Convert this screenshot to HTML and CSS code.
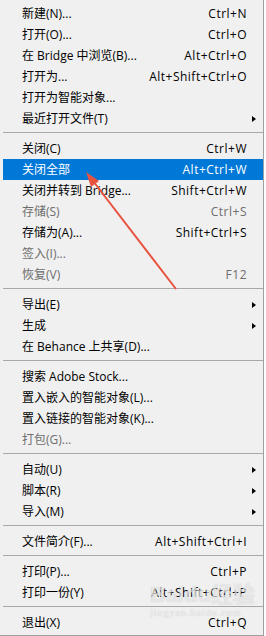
FILE: index.html
```html
<!DOCTYPE html>
<html>
<head>
<meta charset="utf-8">
<link rel="stylesheet" href="styles.css">
</head>
<body>
<div class="menu">
  <div class="item"><span class="label">新建(N)...</span><span class="key">Ctrl+N</span></div>
  <div class="item"><span class="label">打开(O)...</span><span class="key">Ctrl+O</span></div>
  <div class="item"><span class="label">在 Bridge 中浏览(B)...</span><span class="key">Alt+Ctrl+O</span></div>
  <div class="item"><span class="label">打开为...</span><span class="key">Alt+Shift+Ctrl+O</span></div>
  <div class="item"><span class="label">打开为智能对象...</span></div>
  <div class="item sub"><span class="label">最近打开文件(T)</span><span class="arrow"></span></div>
  <div class="sep"></div>
  <div class="item"><span class="label">关闭(C)</span><span class="key">Ctrl+W</span></div>
  <div class="item active"><span class="label">关闭全部</span><span class="key">Alt+Ctrl+W</span></div>
  <div class="item"><span class="label">关闭并转到 Bridge...</span><span class="key">Shift+Ctrl+W</span></div>
  <div class="item disabled"><span class="label">存储(S)</span><span class="key">Ctrl+S</span></div>
  <div class="item"><span class="label">存储为(A)...</span><span class="key">Shift+Ctrl+S</span></div>
  <div class="item disabled"><span class="label">签入(I)...</span></div>
  <div class="item disabled"><span class="label">恢复(V)</span><span class="key">F12</span></div>
  <div class="sep"></div>
  <div class="item sub"><span class="label">导出(E)</span><span class="arrow"></span></div>
  <div class="item sub"><span class="label">生成</span><span class="arrow"></span></div>
  <div class="item"><span class="label">在 Behance 上共享(D)...</span></div>
  <div class="sep"></div>
  <div class="item"><span class="label">搜索 Adobe Stock...</span></div>
  <div class="item"><span class="label">置入嵌入的智能对象(L)...</span></div>
  <div class="item"><span class="label">置入链接的智能对象(K)...</span></div>
  <div class="item disabled"><span class="label">打包(G)...</span></div>
  <div class="sep"></div>
  <div class="item sub"><span class="label">自动(U)</span><span class="arrow"></span></div>
  <div class="item sub"><span class="label">脚本(R)</span><span class="arrow"></span></div>
  <div class="item sub"><span class="label">导入(M)</span><span class="arrow"></span></div>
  <div class="sep"></div>
  <div class="item"><span class="label">文件简介(F)...</span><span class="key">Alt+Shift+Ctrl+I</span></div>
  <div class="sep"></div>
  <div class="item"><span class="label">打印(P)...</span><span class="key">Ctrl+P</span></div>
  <div class="item"><span class="label">打印一份(Y)</span><span class="key">Alt+Shift+Ctrl+P</span></div>
  <div class="sep"></div>
  <div class="item"><span class="label">退出(X)</span><span class="key">Ctrl+Q</span></div>
</div>
<div class="watermark"><span class="wm-main">Baidu经验</span><span class="wm-sub">jingyan.baidu.com</span></div>
<svg class="pointer" width="266" height="636" viewBox="0 0 266 636">
  <line x1="176" y1="289" x2="93" y2="181" stroke="#e8533f" stroke-width="2"/>
  <polygon points="86,172 99,181 91,187" fill="#e8533f"/>
</svg>
</body>
</html>
```
FILE: styles.css
```css
html, body {
  margin: 0;
  padding: 0;
  background: #ffffff;
}
body {
  width: 266px;
  height: 636px;
  position: relative;
  overflow: hidden;
  font-family: "Open Sans", "Noto Sans CJK SC", sans-serif;
  font-size: 12px;
  color: #000;
}
.menu {
  width: 260px;
  height: 631px;
  padding: 3px 0 1px 3px;
  background: #f0f0f0;
  border-right: 1px solid #a0a0a0;
  border-bottom: 1px solid #a0a0a0;
}
.item {
  height: 21px;
  line-height: 21px;
  display: flex;
  align-items: center;
  justify-content: space-between;
  padding: 0 16px 0 19px;
  white-space: nowrap;
}
.key {
  letter-spacing: 0.5px;
}
.item.active {
  background: #0078d7;
  color: #fff;
}
.item.disabled {
  color: #6d6d6d;
}
.item.sub {
  padding-right: 7px;
}
.arrow {
  width: 0;
  height: 0;
  border-top: 3.5px solid transparent;
  border-bottom: 3.5px solid transparent;
  border-left: 4px solid #000;
}
.sep {
  height: 1px;
  margin: 3px 0 5px 0;
  background: #a8a8a8;
}
.pointer {
  position: absolute;
  left: 0;
  top: 0;
  pointer-events: none;
}
.watermark {
  position: absolute;
  left: 150px;
  top: 583px;
  display: flex;
  flex-direction: column;
  align-items: flex-start;
  color: rgba(255,255,255,0.6);
  text-shadow: 0 0 1px rgba(120,120,120,0.4);
  pointer-events: none;
}
.wm-main {
  font-family: "Liberation Sans", "Noto Sans CJK SC", sans-serif;
  font-size: 22px;
  font-weight: bold;
  line-height: 24px;
}
.wm-sub {
  font-family: "Liberation Serif", serif;
  font-size: 10px;
  line-height: 12px;
  letter-spacing: 1px;
}
```
